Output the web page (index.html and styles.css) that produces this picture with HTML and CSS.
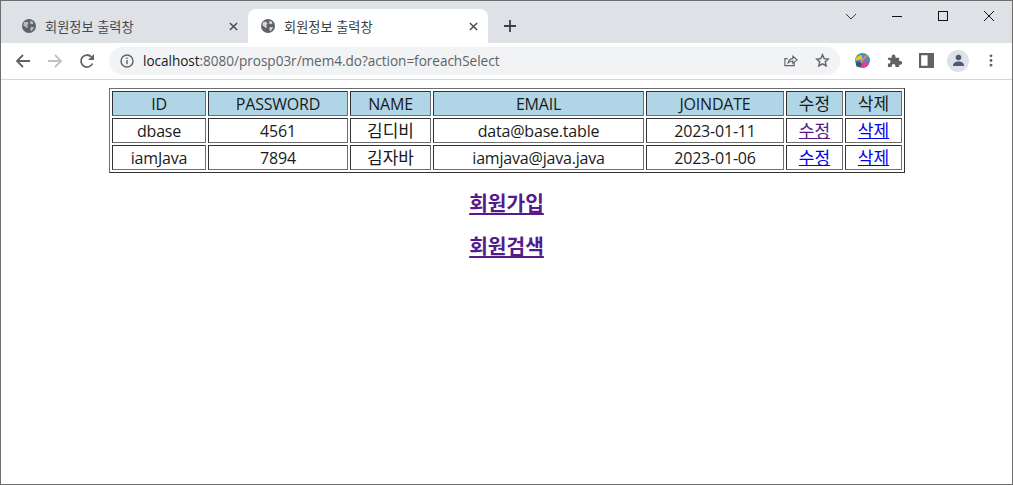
FILE: index.html
```html
<!DOCTYPE html>
<html lang="ko">
<head>
<meta charset="utf-8">
<title>회원정보 출력창</title>
<link rel="stylesheet" href="styles.css">
</head>
<body>
<div class="window">
  <div class="tabstrip">
    <div class="tab">
      <svg class="favicon" viewBox="0 0 16 16"><circle cx="8" cy="8" r="8" fill="#5f6368"/><path d="M2.500 3.500 6 3 7.500 5 6 7 7 9.500 5 10 1.500 7ZM10 2l2.500 1 .5 2.500-2.500.5L9 4.500ZM10 9l4 .5-3 4.500-1.500-2Z" fill="#b9bdc2"/></svg>
      <span class="tab-title">회원정보 출력창</span>
      <svg class="tab-close" viewBox="0 0 10 10"><path d="M1 1l8 8M9 1l-8 8" stroke="#45494e" stroke-width="1.6" fill="none"/></svg>
    </div>
    <div class="tab tab-active">
      <svg class="favicon" viewBox="0 0 16 16"><circle cx="8" cy="8" r="8" fill="#5f6368"/><path d="M2.500 3.500 6 3 7.500 5 6 7 7 9.500 5 10 1.500 7ZM10 2l2.500 1 .5 2.500-2.500.5L9 4.500ZM10 9l4 .5-3 4.500-1.500-2Z" fill="#d3d5d8"/></svg>
      <span class="tab-title">회원정보 출력창</span>
      <svg class="tab-close" viewBox="0 0 10 10"><path d="M1 1l8 8M9 1l-8 8" stroke="#45494e" stroke-width="1.6" fill="none"/></svg>
    </div>
    <svg class="new-tab" viewBox="0 0 12 12"><path d="M6 0v12M0 6h12" stroke="#3c4043" stroke-width="1.8" fill="none"/></svg>
    <div class="win-controls">
      <svg class="win-btn" viewBox="0 0 12 12"><path d="M1 4l5 5 5-5" stroke="#3c4043" fill="none"/></svg>
      <svg class="win-btn" viewBox="0 0 12 12"><path d="M1 6.500h10" stroke="#111" fill="none"/></svg>
      <svg class="win-btn" viewBox="0 0 12 12"><rect x="1.500" y="1.500" width="9" height="9" stroke="#111" fill="none"/></svg>
      <svg class="win-btn" viewBox="0 0 12 12"><path d="M1 1l10 10M11 1L1 11" stroke="#111" fill="none"/></svg>
    </div>
  </div>
  <div class="toolbar">
    <svg class="nav-icon" viewBox="0 0 16 16"><path d="M15 8H2M8 2 2 8l6 6" stroke="#5f6368" stroke-width="1.800" fill="none"/></svg>
    <svg class="nav-icon" viewBox="0 0 16 16"><path d="M1 8h13M8 2l6 6-6 6" stroke="#bdc1c6" stroke-width="1.800" fill="none"/></svg>
    <svg class="nav-icon" viewBox="0 0 16 16"><path d="M13.500 10.500A6 6 0 1 1 12.300 3.800" stroke="#5f6368" stroke-width="1.800" fill="none"/><path d="M15 1v6H9Z" fill="#5f6368"/></svg>
    <div class="omnibox">
      <svg class="info-icon" viewBox="0 0 14 14"><circle cx="7" cy="7" r="6" stroke="#5f6368" stroke-width="1.400" fill="none"/><path d="M7 6v4.200M7 3.500v1.400" stroke="#5f6368" stroke-width="1.400"/></svg>
      <span class="url"><span class="url-host">localhost</span>:8080/prosp03r/mem4.do?action=foreachSelect</span>
      <svg class="omni-icon" viewBox="0 0 16 16"><path d="M12 10v3.500H2V6h3" stroke="#5f6368" stroke-width="1.200" fill="none"/><path d="M5.500 10.500C6 7.500 8 6 10.500 6V3.500L15 7.300 10.500 11V8.500C8.500 8.500 7 9 5.500 10.500Z" stroke="#5f6368" stroke-width="1.200" fill="none"/></svg>
      <svg class="omni-icon star" viewBox="0 0 16 16"><path d="M8 1.800l1.800 4.200 4.500.4-3.400 3 1 4.400L8 11.500l-3.900 2.300 1-4.400-3.400-3 4.500-.4Z" stroke="#5f6368" stroke-width="1.500" fill="none"/></svg>
    </div>
    <div class="ext-icons">
      <svg class="ext" viewBox="0 0 16 16"><circle cx="8" cy="8" r="8" fill="#3f8fc4"/><path d="M0 8a8 8 0 0 1 7-6l1 5Z" fill="#f6c21c"/><path d="M8 16a8 8 0 0 0 7-5l-6-3-3 7Z" fill="#ea3f8e"/><circle cx="4" cy="12" r="3" fill="#35566f"/><path d="M6 10l7-8" stroke="#f0885a" stroke-width="2"/></svg>
      <svg class="ext" viewBox="0 0 16 16"><path d="M1 5h4V3.500a2 2 0 0 1 4 0V5h4v3.500h1.200a2 2 0 0 1 0 4H13V15H9v-1.300a2 2 0 0 0-4 0V15H1v-3.700h.8a2 2 0 0 0 0-4H1Z" fill="#5f6368"/></svg>
      <svg class="ext" viewBox="0 0 14 14"><path d="M0 0h14v14H0ZM2 2v10h6V2Z" fill="#5f6368" fill-rule="evenodd"/></svg>
      <div class="avatar"><svg class="avatar-icon" viewBox="0 0 14 14"><circle cx="7" cy="3.800" r="3" fill="#4c5a75"/><path d="M1 13c0-3.500 3-5 6-5s6 1.500 6 5Z" fill="#4c5a75"/></svg></div>
      <svg class="menu" viewBox="0 0 4 14"><circle cx="2" cy="2" r="1.500" fill="#5f6368"/><circle cx="2" cy="7" r="1.500" fill="#5f6368"/><circle cx="2" cy="12" r="1.500" fill="#5f6368"/></svg>
    </div>
  </div>
  <main class="page">
    <table class="members">
      <colgroup>
        <col class="c-id"><col class="c-pw"><col class="c-name"><col class="c-email"><col class="c-date"><col class="c-act"><col class="c-act">
      </colgroup>
      <thead>
        <tr><th>ID</th><th>PASSWORD</th><th>NAME</th><th>EMAIL</th><th>JOINDATE</th><th class="ko">수정</th><th class="ko">삭제</th></tr>
      </thead>
      <tbody>
        <tr><td>dbase</td><td>4561</td><td class="ko">김디비</td><td>data@base.table</td><td>2023-01-11</td><td class="ko"><a class="visited" href="#">수정</a></td><td class="ko"><a href="#">삭제</a></td></tr>
        <tr><td>iamJava</td><td>7894</td><td class="ko">김자바</td><td>iamjava@java.java</td><td>2023-01-06</td><td class="ko"><a href="#">수정</a></td><td class="ko"><a href="#">삭제</a></td></tr>
      </tbody>
    </table>
    <h3 class="page-link"><a class="visited" href="#">회원가입</a></h3>
    <h3 class="page-link"><a class="visited" href="#">회원검색</a></h3>
  </main>
</div>
</body>
</html>
```
FILE: styles.css
```css
* { box-sizing: border-box; }
html, body { margin: 0; padding: 0; background: #fff; }
body { font-family: "Open Sans", "Noto Sans CJK KR", sans-serif; color: #000; }
.window { width: 1013px; height: 485px; border: 1px solid #6e6e6e; overflow: hidden; display: flex; flex-direction: column; }
.tabstrip { height: 42px; flex: none; background: #dee1e6; display: flex; align-items: flex-end; }
.tab { width: 240px; height: 34px; display: flex; align-items: center; padding: 0 8px 0 13px; border-radius: 8px 8px 0 0; font-size: 13.2px; color: #45494e; }
.tab:first-child { width: 247px; padding-left: 21px; }
.tab-active { background: #fff; color: #3c4043; }
.favicon { width: 14px; height: 14px; flex: none; }
.tab-title { margin-left: 9px; flex: 1; font-family: "Noto Sans CJK KR", sans-serif; }
.tab-close { width: 9px; height: 9px; flex: none; margin-right: 2px; }
.new-tab { width: 12px; height: 12px; margin: 0 0 11px 16px; }
.win-controls { margin-left: auto; align-self: flex-start; display: flex; gap: 34px; padding: 9px 17px 0 0; }
.win-btn { width: 12px; height: 12px; }
.toolbar { height: 37px; flex: none; display: flex; align-items: center; padding: 0 12px 1px 14px; background: #fff; border-bottom: 1px solid #d5d7db; }
.nav-icon { width: 16px; height: 16px; margin-right: 16px; flex: none; }
.omnibox { width: 731px; height: 28px; margin-left: -2px; border-radius: 14px; background: #f1f3f4; display: flex; align-items: center; padding: 0 10px 0 11px; flex: none; }
.info-icon { width: 14px; height: 14px; flex: none; }
.url { margin-left: 9px; flex: 1; font-size: 13.6px; letter-spacing: -0.04px; color: #5f6368; white-space: nowrap; }
.url-host { color: #202124; }
.omni-icon { width: 15px; height: 15px; flex: none; }
.star { margin-left: 17px; }
.ext-icons { display: flex; align-items: center; margin-left: 15px; }
.ext { width: 15px; height: 15px; margin-right: 17px; flex: none; }
.avatar { width: 22px; height: 22px; border-radius: 50%; background: #dee1e6; display: flex; align-items: center; justify-content: center; margin-left: -4px; margin-right: 20px; }
.avatar-icon { width: 13px; height: 13px; }
.menu { width: 4px; height: 13px; }
.page { flex: 1; padding-top: 8px; text-align: center; }
.members { width: 796px; margin-left: 108px; table-layout: fixed; border: 1px solid #6e6e6e; border-right-color: #333; border-bottom-color: #333; border-spacing: 2px; border-collapse: separate; font-size: 16px; letter-spacing: -0.2px; color: #1a1a1a; }
.c-id { width: 94px; } .c-pw { width: 140px; } .c-name { width: 81px; } .c-email { width: 211px; } .c-date { width: 138px; } .c-act { width: 57px; }
.members th, .members td { height: 25px; padding: 0; border: 1px solid #333; border-right-color: #6e6e6e; border-bottom-color: #6e6e6e; font-weight: 400; text-align: center; line-height: 22px; white-space: nowrap; }
.members th { background: #b0d5e6; }
.members .ko { font-size: 17px; letter-spacing: 0; }
a { color: #0000ee; }
a.visited { color: #551a8b; }
.page-link { margin: 18px 0 0; font-size: 20.3px; font-weight: 700; line-height: 25px; }
.members + .page-link { margin-top: 18px; }
```
